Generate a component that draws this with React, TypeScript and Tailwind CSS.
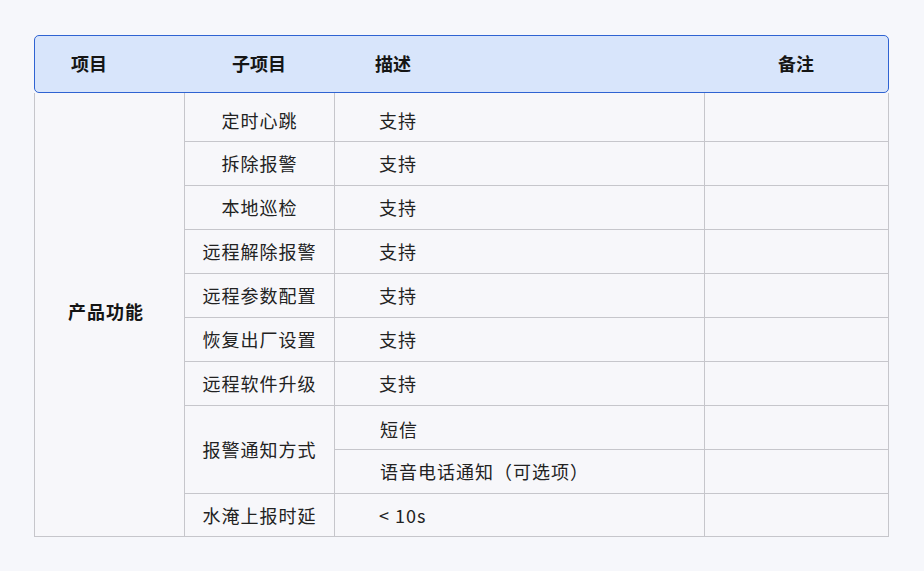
import React from "react";

const font = { fontFamily: '"Noto Sans CJK SC", "Noto Sans", sans-serif' };

const rows: { name: string; desc: string[] }[] = [
  { name: "定时心跳", desc: ["支持"] },
  { name: "拆除报警", desc: ["支持"] },
  { name: "本地巡检", desc: ["支持"] },
  { name: "远程解除报警", desc: ["支持"] },
  { name: "远程参数配置", desc: ["支持"] },
  { name: "恢复出厂设置", desc: ["支持"] },
  { name: "远程软件升级", desc: ["支持"] },
  { name: "报警通知方式", desc: ["短信", "语音电话通知（可选项）"] },
  { name: "水淹上报时延", desc: ["< 10s"] },
];

export default function App() {
  return (
    <div
      className="w-[924px] h-[571px] bg-[#f6f7fb] pt-[35px] pl-[34px] pr-[35px] text-[#222]"
      style={font}
    >
      {/* Header */}
      <div className="flex h-[58px] items-center rounded-[5px] border border-[#2f63d2] bg-[#d8e5fb] pb-[1px] text-[18px] font-bold text-[#151515]">
        <div className="w-[149px] pl-[36px]">项目</div>
        <div className="w-[150px] text-center">子项目</div>
        <div className="w-[370px] pl-[41px]">描述</div>
        <div className="flex-1 text-center">备注</div>
      </div>
      {/* Body */}
      <div className="flex border-x border-b border-[#c6c6cb] bg-[#f7f7fa]">
        <div className="flex w-[149px] items-center pl-[33px] pb-[6px] text-[18px] font-bold tracking-[1px] text-[#151515]">
          产品功能
        </div>
        <div className="flex flex-1 flex-col border-l border-[#c6c6cb]">
          {rows.map((r, i) => {
            const first = i === 0;
            const last = i === rows.length - 1;
            const h = first ? "h-[48px]" : last ? "h-[43px]" : "h-[44px]";
            const pad = first ? "pt-[7px]" : "";
            if (r.desc.length > 1) {
              return (
                <div key={i} className="flex border-t border-[#c6c6cb]">
                  <div className="flex h-[87px] w-[150px] items-center justify-center border-r border-[#c6c6cb] text-[18px] tracking-[1px]">
                    {r.name}
                  </div>
                  <div className="flex flex-1 flex-col">
                    {r.desc.map((d, j) => (
                      <div
                        key={j}
                        className={`flex ${j > 0 ? "h-[44px] border-t border-[#c6c6cb]" : "h-[43px]"}`}
                      >
                        <div
                          className={`flex w-[370px] items-center border-r border-[#c6c6cb] pl-[45px] ${j === 0 ? "pt-[3px]" : ""} text-[18px] tracking-[1px]`}
                        >
                          {d}
                        </div>
                        <div className="flex-1" />
                      </div>
                    ))}
                  </div>
                </div>
              );
            }
            return (
              <div
                key={i}
                className={`flex ${h} ${first ? "" : "border-t border-[#c6c6cb]"}`}
              >
                <div className={`flex w-[150px] items-center justify-center border-r border-[#c6c6cb] ${pad} text-[18px] tracking-[1px]`}>
                  {r.name}
                </div>
                <div className={`flex w-[370px] items-center border-r border-[#c6c6cb] pl-[44px] ${pad} text-[18px] tracking-[1px]`}>
                  {r.desc[0]}
                </div>
                <div className="flex-1" />
              </div>
            );
          })}
        </div>
      </div>
    </div>
  );
}
